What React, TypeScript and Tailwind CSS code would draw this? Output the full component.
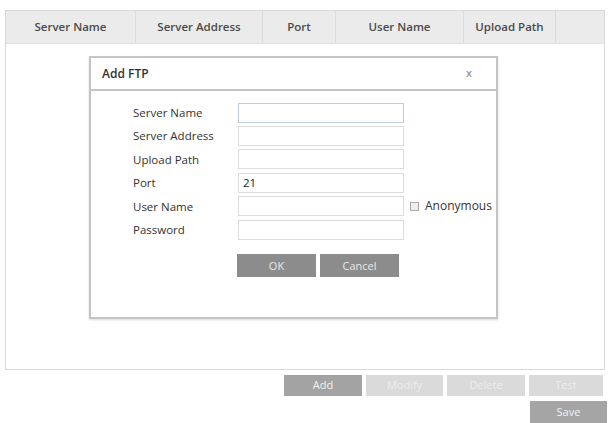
import React from 'react';

const columns = [
  { title: 'Server Name', width: 'w-[130px]' },
  { title: 'Server Address', width: 'w-[127px]' },
  { title: 'Port', width: 'w-[73px]' },
  { title: 'User Name', width: 'w-[128px]' },
  { title: 'Upload Path', width: 'w-[92px]' },
];

const fields = [
  { label: 'Server Name', value: '', focused: true },
  { label: 'Server Address', value: '' },
  { label: 'Upload Path', value: '' },
  { label: 'Port', value: '21' },
  { label: 'User Name', value: '', anonymous: true },
  { label: 'Password', value: '' },
];

function Field({ label, value, focused, anonymous }: { label: string; value: string; focused?: boolean; anonymous?: boolean }) {
  return (
    <div className="flex items-center h-[23.4px]">
      <span className="w-[105px] text-[11.5px] text-[#333]">{label}</span>
      <div
        className={
          focused
            ? 'w-[166px] h-[20px] border border-[#b9cfd9] bg-white px-1 text-[11.5px] leading-[18px] text-[#222]'
            : 'w-[166px] h-[20px] border border-[#dcdcdc] bg-white px-1 text-[11.5px] leading-[18px] text-[#222]'
        }
      >
        {value}
      </div>
      {anonymous && (
        <label className="flex items-center ml-[6px] gap-[6px] text-[12px] text-[#333]">
          <span className="w-[9px] h-[9px] border border-[#aaa] bg-[#eee]" />
          Anonymous
        </label>
      )}
    </div>
  );
}

function AddFtpDialog() {
  return (
    <div className="absolute left-[83px] top-[45px] w-[409px] h-[263px] border-2 border-[#c4c4c4] bg-white shadow-[0_1px_2px_rgba(0,0,0,0.15)] flex flex-col">
      <div className="h-[33px] flex items-center justify-between px-[11px] border-b-2 border-[#c4c4c4]">
        <span className="text-[12px] font-semibold text-[#333]">Add FTP</span>
        <span className="text-[11px] font-semibold text-[#999] mr-[13px]">x</span>
      </div>
      <div className="pl-[42px] pt-[10px]">
        {fields.map((f) => (
          <Field key={f.label} {...f} />
        ))}
        <div className="flex gap-[4px] ml-[104px] mt-[13px]">
          <button className="w-[79px] h-[23px] bg-[#8c8c8c] text-[11px] text-[#e8e8e8]">OK</button>
          <button className="w-[79px] h-[23px] bg-[#8c8c8c] text-[11px] text-[#e8e8e8]">Cancel</button>
        </div>
      </div>
    </div>
  );
}

export default function App() {
  return (
    <div className="w-[609px] h-[423px] bg-white overflow-hidden font-['Open_Sans','Liberation_Sans',sans-serif]">
      <div className="relative ml-[5px] mt-[10px] w-[600px] h-[360px] border border-[#d9d9d9]">
        <div className="flex h-[33px] bg-[#ebebeb] border-b border-[#e2e2e2]">
          {columns.map((c) => (
            <div
              key={c.title}
              className={`${c.width} flex items-center justify-center border-r border-[#dcdcdc] text-[11.5px] font-semibold text-[#4a4a4a]`}
            >
              {c.title}
            </div>
          ))}
          <div className="flex-1" />
        </div>
        <AddFtpDialog />
      </div>
      <div className="flex justify-end gap-[4px] mr-[6px] mt-[5px]">
        <button className="w-[78px] h-[21px] bg-[#a3a3a3] text-[11px] text-[#f2f2f2]">Add</button>
        <button className="w-[77px] h-[21px] bg-[#dadada] text-[11px] text-[#ececec]">Modify</button>
        <button className="w-[78px] h-[21px] bg-[#dadada] text-[11px] text-[#ececec]">Delete</button>
        <button className="w-[74px] h-[21px] bg-[#dadada] text-[11px] text-[#ececec]">Test</button>
      </div>
      <div className="flex justify-end mr-[2px] mt-[5px]">
        <button className="w-[77px] h-[22px] bg-[#a5a5a5] text-[11px] text-[#f2f2f2]">Save</button>
      </div>
    </div>
  );
}
